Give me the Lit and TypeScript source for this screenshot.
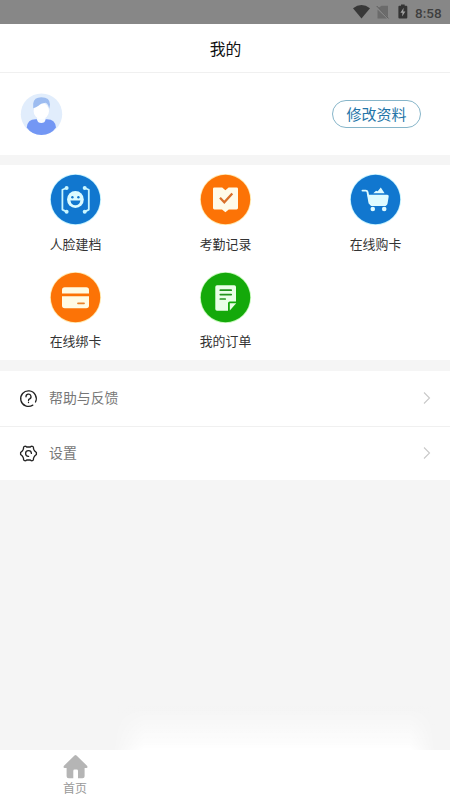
import { LitElement, html, svg, css } from "lit";
import { customElement, property } from "lit/decorators.js";

const tileArt: Record<string, unknown> = {
  face: svg`
    <g fill="none" stroke="#c9f6ff" stroke-width="1.8" stroke-linecap="round" stroke-linejoin="round">
      <path d="M16.5 14L12.4 15.8V35.6L16.5 37.8M34.8 14L38.8 15.8V35.6L34.8 37.8"/>
    </g>
    <g fill="#c9f6ff"><circle cx="16.6" cy="14" r="2"/><circle cx="34.7" cy="14" r="2"/>
    <circle cx="16.6" cy="37.8" r="2"/><circle cx="34.7" cy="37.8" r="2"/></g>
    <circle cx="25.4" cy="25.5" r="8.4" fill="#dcfbff"/>
    <circle cx="22.4" cy="23.3" r="1.2" fill="#1177cf"/><circle cx="28.4" cy="23.3" r="1.2" fill="#1177cf"/>
    <path d="M20.4 26.5H30.4Q29.6 31.2 25.4 31.2T20.4 26.5Z" fill="#1177cf"/>`,
  book: svg`
    <path d="M14.4 13.4H22.2L25.4 16.3L28.6 13.4H36.6Q38 13.4 38 14.8V34Q38 35.4 36.6 35.4H28.8L25.4 38.2L22 35.4H14.4Q13 35.4 13 34V14.8Q13 13.4 14.4 13.4Z" fill="#fffbe9"/>
    <path d="M20 23.8L24.3 28.2L32.3 19.4" fill="none" stroke="#d9702a" stroke-width="2.3"/>`,
  cart: svg`
    <path d="M12.5 16.6H15.8Q17.2 16.6 17.5 17.9L19.5 29" fill="none" stroke="#dffbff" stroke-width="1.9" stroke-linecap="round"/>
    <path d="M17.5 20.7H37.2Q39 20.7 38.7 22.5L37.6 29.2Q37.1 32 34.3 32H22.5Q19.7 32 19.2 29.2Z" fill="#dffbff"/>
    <path d="M23.3 19.3L26 16.8L27.7 17.3L30.8 13.4L34.6 19.3Z" fill="#dffbff"/>
    <circle cx="22.8" cy="35" r="2.3" fill="#dffbff"/><circle cx="34.2" cy="35" r="2.3" fill="#dffbff"/>`,
  card: svg`
    <path d="M12 21.4V18Q12 15.2 14.8 15.2H36.2Q39 15.2 39 18V21.4ZM12 24.3H39V33.5Q39 36.3 36.2 36.3H14.8Q12 36.3 12 33.5Z" fill="#fffbe4"/>
    <path d="M28 31.3H34" stroke="#e98229" stroke-width="1.8" stroke-linecap="round"/>`,
  order: svg`
    <path d="M17 13.2H34.3Q36 13.2 36 14.9V29.5H29.8Q28 29.5 28 31.3V38.8H17Q15.3 38.8 15.3 37.1V14.9Q15.3 13.2 17 13.2Z" fill="#e9ffe7"/>
    <path d="M29.8 38.5V31.3H36.2Z" fill="#e9ffe7"/>
    <path d="M20.3 18.2H31.2M20.3 22.6H31.2M20.3 27H25.2" stroke="#22941d" stroke-width="1.7" stroke-linecap="round"/>`,
};

@customElement("menu-tile")
class MenuTile extends LitElement {
  @property() icon = "";
  @property() label = "";
  @property() color = "";
  @property() glow = "";

  static styles = css`
    :host { display: flex; flex-direction: column; align-items: center; }
    svg { display: block; width: 51px; height: 51px; overflow: visible; }
    .label { margin-top: 8.5px; padding-left: 1px; font-size: 12.9px; line-height: 20px; color: #333; white-space: nowrap; }
  `;

  render() {
    return html`
      <svg viewBox="0 0 51 51">
        <circle cx="25.5" cy="25.5" r="25.6" fill=${this.glow} />
        <circle cx="25.5" cy="25.5" r="24.7" fill=${this.color} />
        ${tileArt[this.icon]}
      </svg>
      <span class="label">${this.label}</span>`;
  }
}

@customElement("list-row")
class ListRow extends LitElement {
  @property() icon = "";
  @property() label = "";

  static styles = css`
    :host { display: flex; align-items: center; box-sizing: border-box; height: 54.5px; padding: 0 19px 0 20px; background: #fff; }
    .icon { width: 17px; height: 17px; margin-right: 12px; flex: none; overflow: visible; }
    .label { flex: 1; font-size: 13.9px; line-height: 20px; padding-bottom: 2px; color: #777; }
    .arrow { width: 8px; height: 14px; }
  `;

  render() {
    const art = this.icon === "help"
      ? svg`<path d="M12.8 15.1A7.8 7.8 0 1 1 15.5 12"/>
            <path d="M6 6.8A2.5 2.5 0 1 1 9.6 8.9Q8.5 9.4 8.5 10.4M8.5 12.2V12.6"/>`
      : svg`<path d="M4.9 1.2Q6 1.2 6.7 2H10.3Q11 1.2 12.1 1.2L13.4 2Q13.3 3.6 14 4.8L15.2 6.6L16.4 7.6V9.4L15.2 10.4L14 12.2Q13.3 13.4 13.4 15L12.1 15.8Q11 15.8 10.3 15H6.7Q6 15.8 4.9 15.8L3.6 15Q3.7 13.4 3 12.2L1.8 10.4L.6 9.4V7.6L1.8 6.6L3 4.8Q3.7 3.6 3.6 2Z"/>
            <path d="M8.6 11.4A2.9 2.9 0 1 1 11.4 8.4"/>`;
    return html`
      <svg class="icon" viewBox="0 0 17 17" fill="none" stroke="#222" stroke-width="1.3" stroke-linecap="round" stroke-linejoin="round">${art}</svg>
      <span class="label">${this.label}</span>
      <svg class="arrow" viewBox="0 0 8 14" fill="none" stroke="#c9c9c9" stroke-width="1.1"><path d="M1 1.5L6.5 7L1 12.5"/></svg>`;
  }
}

@customElement("app-root")
class AppRoot extends LitElement {
  static styles = css`
    :host { display: flex; flex-direction: column; height: 800px; width: 450px; overflow: hidden; background: #f5f5f5;
      font-family: "Noto Sans CJK SC", sans-serif; }
    .status { height: 24px; background: #878787; display: flex; align-items: center; justify-content: flex-end; box-sizing: border-box; padding-right: 8px; }
    .status svg { display: block; width: 58px; height: 18px; margin-right: 4px; }
    .clock { font: 500 13.5px/24px Roboto, sans-serif; color: #3f3f3f; width: 27px; white-space: nowrap; padding-top: 2px; }
    .title { height: 49px; box-sizing: border-box; border-bottom: 1px solid #f0f0f0; background: #fff; display: flex; align-items: center; justify-content: center; font-size: 15.8px; padding-left: 1px; color: #111; }
    .profile { height: 82px; box-sizing: border-box; background: #fff; display: flex; align-items: center; justify-content: space-between; padding: 0 29px 0 20px; }
    .avatar { width: 43px; height: 43px; display: block; }
    .edit { box-sizing: border-box; width: 89px; height: 28px; border: 1px solid #86b5c9; border-radius: 14px; font-size: 15px; line-height: 26px; text-align: center; color: #2475a8; }
    .tiles { margin-top: 10px; height: 195px; box-sizing: border-box; padding-top: 9px; background: #fff; display: grid; grid-template-columns: repeat(3, 1fr); grid-auto-rows: 80px; row-gap: 17.5px; }
    .list { margin-top: 11px; display: flex; flex-direction: column; }
    .list list-row + list-row { border-top: 1px solid #f0f0f0; }
    .space { flex: 1; display: flex; align-items: flex-end; }
    .haze { width: 324px; height: 44px; margin-left: 112px;
      background: linear-gradient(to bottom, rgba(255,255,255,0), rgba(255,255,255,.35) 40%, rgba(255,255,255,.75) 85%, #fff);
      mask-image: linear-gradient(to right, transparent, #000 10%, #000 92%, transparent); }
    .tabs { height: 50px; background: #fff; display: grid; grid-template-columns: repeat(3, 1fr); }
    .tab { display: flex; flex-direction: column; align-items: center; padding-top: 4px; font-size: 12px; line-height: 16px; color: #999; }
    .tab svg { width: 25px; height: 25px; margin-bottom: 1px; }
  `;

  render() {
    const blue = "#1177cf", orange = "#fc7306", green = "#14a90a";
    return html`
      <div class="status">
        <svg viewBox="0 0 58 18">
          <path d="M0 5.2Q8.5-1.2 17 5.2L8.5 15.5Z" fill="#383838"/>
          <path d="M28.5 2.8H35V14L25.6 4.7ZM24.5 6.5L34 15.5H24.5Z" fill="#6b6b6b"/>
          <path d="M23.7 3L35.5 15.4" stroke="#5b5b5b" stroke-width="1"/>
          <path d="M48 2.8V1.5H51.7V2.8H53.3Q54.3 2.8 54.3 3.8V14.6Q54.3 15.6 53.3 15.6H46.4Q45.4 15.6 45.4 14.6V3.8Q45.4 2.8 46.4 2.8Z" fill="#343434"/>
          <path d="M50.7 4.8L47.4 9.8H49.5L49.1 13.5L52.4 8.5H50.2Z" fill="#a2a2a2"/>
        </svg>
        <span class="clock">8:58</span>
      </div>
      <div class="title">我的</div>
      <div class="profile">
        <svg class="avatar" viewBox="0 0 43 43">
          <circle cx="21.5" cy="21.2" r="20.7" fill="#e1edfc"/>
          <path d="M6.7 34.5Q7.5 26.2 15.5 26.2H27Q35.3 26.2 36 34.5Q31 41.9 21.4 41.9T6.7 34.5Z" fill="#7397f4"/>
          <path d="M17 23H25.5V26.5Q25 30 21.3 30T17 26.5Z" fill="#f8fcff"/>
          <ellipse cx="21.3" cy="18" rx="7.7" ry="8.2" fill="#fff"/>
          <path d="M13.2 15.2V10.5Q14 4.2 21.3 4.2Q30 4.2 30 11.5L29.2 16Q28.8 11.5 25.8 9.8Q20.5 10.5 18.5 12.8Q16 14.8 13.2 15.2Z" fill="#9dbcf0"/>
        </svg>
        <div class="edit">修改资料</div>
      </div>
      <div class="tiles">
        <menu-tile icon="face" label="人脸建档" color=${blue} glow="#c5f3ff"></menu-tile>
        <menu-tile icon="book" label="考勤记录" color=${orange} glow="#ffe9b0"></menu-tile>
        <menu-tile icon="cart" label="在线购卡" color=${blue} glow="#c5f3ff"></menu-tile>
        <menu-tile icon="card" label="在线绑卡" color=${orange} glow="#ffe9b0"></menu-tile>
        <menu-tile icon="order" label="我的订单" color=${green} glow="#c4f9b8"></menu-tile>
      </div>
      <div class="list">
        <list-row icon="help" label="帮助与反馈"></list-row>
        <list-row icon="settings" label="设置"></list-row>
      </div>
      <div class="space"><div class="haze"></div></div>
      <div class="tabs">
        <div class="tab">
          <svg viewBox="0 0 25 25"><path d="M11.5 1.5Q12.5 .6 13.5 1.5L24 11.7Q25.3 13.5 23.4 14H21.6V22.2Q21.6 24.3 19.5 24.3H15V17Q15 15.6 13.8 15.6H11.5Q10.3 15.6 10.3 17V24.3H5.7Q3.6 24.3 3.6 22.2V14H1.7Q-.3 13.5 1 11.7Z" fill="#b5b5b5"/></svg>
          <span>首页</span>
        </div>
      </div>`;
  }
}
